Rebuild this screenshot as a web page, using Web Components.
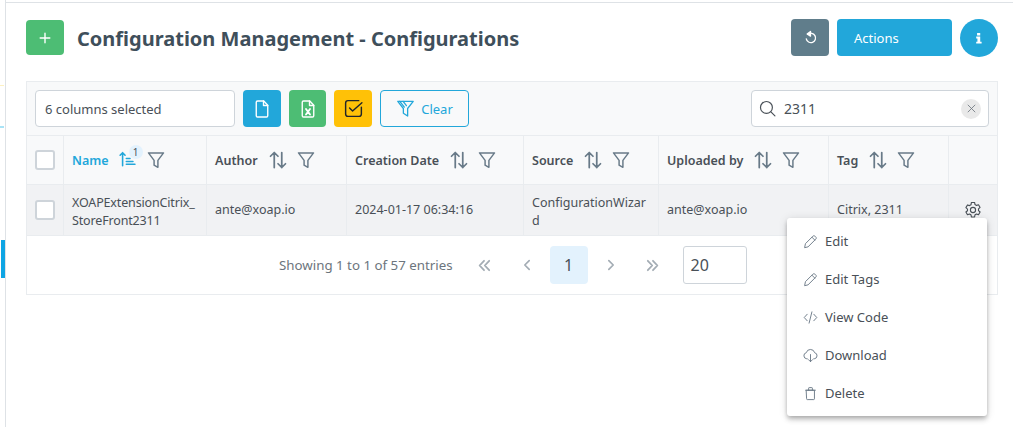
<!DOCTYPE html>
<html lang="en">
<head>
<meta charset="utf-8">
<title>Configurations</title>
<style>
  html, body { margin: 0; background: #fff; }
  body { font-family: "Noto Sans", sans-serif; color: #495057; font-size: 13px; }
</style>
</head>
<body>
<app-page></app-page>
<script>
const ICONS = {
  plus: '<path d="M8 2.500v11M2.500 8h11"/>',
  undo: '<path d="M5.200 4.600a5 5 0 1 1-1.700 4.800"/><path d="M8 1.600 4.400 4.200 8 6.500z" fill="currentColor"/>',
  info: '<path d="M5.800 2.200h3.600v2.800H5.800zM4.800 6.400h4.600v5.800h1.600v2.200H4.800v-2.200h1.400V8.600H4.800z" fill="currentColor" stroke="none"/>',
  file: '<path d="M3.400 2.600c0-.6.4-1 1-1h5l3.200 3.400v8.400c0 .6-.4 1-1 1H4.400c-.6 0-1-.4-1-1z"/><path d="M9.200 1.600v3.600h3.400"/>',
  excel: '<path d="M3.400 2.600c0-.6.4-1 1-1h5l3.200 3.400v8.400c0 .6-.4 1-1 1H4.400c-.6 0-1-.4-1-1z"/><path d="M9.200 1.600v3.600h3.400"/><path d="m6.400 8 3.200 4.400M9.600 8l-3.200 4.400" stroke-width="1.500"/>',
  check: '<path d="M14 7v5.200c0 1-.8 1.800-1.800 1.800H3.800c-1 0-1.800-.8-1.800-1.800V3.800C2 2.800 2.800 2 3.800 2H12"/><path d="m5 7.600 2.300 2.300L14.400 3.600"/>',
  clear: '<path d="M1.500 2h13L9.800 8v6.300L6.200 12V8z"/><path d="M3.200 2 7 6.800M6 2l2.800 3.600"/>',
  search: '<circle cx="7" cy="7" r="5.600"/><path d="m11.200 11.200 3.800 3.800"/>',
  times: '<path d="m3 3 10 10M13 3 3 13"/>',
  sortAlt: '<path d="M5 14V2M2 5l3-3 3 3M11 2v12M8 11l3 3 3-3"/>',
  sortUp: '<path d="M3.200 13V1.500M1 3.800l2.200-2.300 2.200 2.300M6.500 6.700h3.300M6.500 9.300h5.900M6.500 11.700h7.700"/>',
  filter: '<path d="M1.300 1.700h13.400L9.700 8.300v6.200L6.300 12.600V8.300z"/>',
  cog: '<path d="M6.600 1.300h2.800l.4 1.900 1.300.7 1.800-.6 1.400 2.400-1.400 1.300v1.500l1.400 1.300-1.400 2.400-1.800-.6-1.300.7-.4 1.900H6.600l-.4-1.900-1.300-.7-1.800.6-1.400-2.400L3.100 8.700V7.200L1.700 5.900l1.400-2.400 1.800.6 1.300-.7z"/><circle cx="8" cy="8" r="2.300"/>',
  pencil: '<path d="m1.800 14.200.8-3.900 8-8c.6-.6 1.500-.6 2.100 0l1 1c.6.600.6 1.500 0 2.100l-8 8z"/><path d="m9.500 3.400 3.100 3.100"/>',
  code: '<path d="M4.500 4.500 1.300 8l3.200 3.500M11.500 4.500 14.700 8l-3.200 3.500M9.500 2 6.500 14"/>',
  download: '<path d="M4.500 11.500H4A3.300 3.300 0 0 1 3.500 5 4.600 4.600 0 0 1 12.400 5 3.300 3.300 0 0 1 12 11.500h-.5"/><path d="M8 7v7.500M5.800 12.400 8 14.600l2.200-2.200"/>',
  trash: '<path d="M3.800 4.500h8.400v9.200c0 .5-.3.800-.8.800H4.600c-.5 0-.8-.3-.8-.8zM2.800 4.500h10.400M6 4.500V2.300c0-.4.2-.6.6-.6h2.800c.4 0 .6.2.6.6v2.200"/>',
  first: '<path d="M7.500 3 2.800 8l4.700 5M13 3 8.300 8l4.700 5"/>',
  prev: '<path d="M10.500 3 5.500 8l5 5"/>',
  next: '<path d="m5.500 3 5 5-5 5"/>',
  last: '<path d="m3 3 4.700 5L3 13M8.500 3l4.700 5-4.700 5"/>'
};

class AppIcon extends HTMLElement {
  connectedCallback() {
    const size = this.getAttribute('size') || 14;
    const sw = this.getAttribute('stroke') || 1.2;
    this.attachShadow({ mode: 'open' }).innerHTML = `
      <style>:host { display: inline-flex; line-height: 0; flex: none; } svg { display: block; }</style>
      <svg width="${size}" height="${size}" viewBox="0 0 16 16" fill="none" stroke="currentColor"
        stroke-width="${sw}" stroke-linecap="round" stroke-linejoin="round">${ICONS[this.getAttribute('name')]}</svg>`;
  }
}
customElements.define('app-icon', AppIcon);

class AppButton extends HTMLElement {
  constructor() {
    super();
    this.attachShadow({ mode: 'open' }).innerHTML = `
      <style>
        :host {
          display: inline-flex; align-items: center; justify-content: center; box-sizing: border-box;
          width: var(--w, 38px); height: var(--h, 37px); flex: none;
          background: var(--bg, #22a7da); color: var(--fg, #fff);
          border-radius: var(--r, 4px); font: 13px "Noto Sans", sans-serif; gap: 8px;
        }
      </style>
      <slot></slot>`;
  }
}
customElements.define('app-button', AppButton);

class PageHeader extends HTMLElement {
  constructor() {
    super();
    this.attachShadow({ mode: 'open' }).innerHTML = `
      <style>
        :host { display: flex; align-items: center; height: 37px; gap: 8px; }
        h1 { margin: 2px 0 0 5px; font: 700 20px/37px "Noto Sans", sans-serif; color: #3f4f5b; flex: 1; }
        .add { --bg: #4dbd74; --h: 35px; }
        .back { --bg: #607d8b; }
        .actions { --w: 115px; justify-content: flex-start; padding-left: 17px; }
        .info { --r: 50%; --h: 38px; }
      </style>
      <app-button class="add"><app-icon name="plus" size="14" stroke="1.600"></app-icon></app-button>
      <h1>Configuration Management - Configurations</h1>
      <app-button class="back"><app-icon name="undo" size="15" stroke="1.400"></app-icon></app-button>
      <app-button class="actions">Actions</app-button>
      <app-button class="info"><app-icon name="info" size="14"></app-icon></app-button>`;
  }
}
customElements.define('page-header', PageHeader);

class TableToolbar extends HTMLElement {
  constructor() {
    super();
    this.attachShadow({ mode: 'open' }).innerHTML = `
      <style>
        :host {
          display: flex; align-items: center; gap: 8px; height: 54px; box-sizing: border-box;
          padding: 0 8px; background: #f8f9fa; border-bottom: 1px solid #e9ecef;
        }
        .field {
          box-sizing: border-box; height: 37px; background: #fff; border: 1px solid #ced4da;
          border-radius: 4px; display: flex; align-items: center; font-size: 13px; color: #495057;
        }
        .cols { width: 200px; padding-left: 9px; }
        .xls { --bg: #4dbd74; --w: 37px; }
        .chk { --bg: #ffc107; --fg: #212529; }
        .clear {
          --bg: transparent; --fg: #22a7da; --w: 89px; border: 1px solid #22a7da; gap: 6px;
        }
        .search { width: 238px; margin-left: auto; padding: 0 7px 0 7px; gap: 8px; }
        .search span { flex: 1; font-size: 14px; }
        .x {
          width: 20px; height: 20px; border-radius: 50%; background: #e9e9e9; color: #6c757d;
          display: flex; align-items: center; justify-content: center;
        }
      </style>
      <div class="field cols"><span>6 columns selected</span></div>
      <app-button><app-icon name="file" size="20" stroke="1.100"></app-icon></app-button>
      <app-button class="xls"><app-icon name="excel" size="20" stroke="1.100"></app-icon></app-button>
      <app-button class="chk"><app-icon name="check" size="21" stroke="1.100"></app-icon></app-button>
      <app-button class="clear"><app-icon name="clear" size="19" stroke="1.100"></app-icon><span>Clear</span></app-button>
      <div class="field search">
        <app-icon name="search" size="17" stroke="1.100"></app-icon>
        <span>2311</span>
        <div class="x"><app-icon name="times" size="11"></app-icon></div>
      </div>`;
  }
}
customElements.define('table-toolbar', TableToolbar);

class DataTable extends HTMLElement {
  constructor() {
    super();
    const cols = ['Author', 'Creation Date', 'Source', 'Uploaded by', 'Tag'];
    const head = cols.map(c => `
      <div class="th"><span>${c}</span>
        <app-icon name="sortAlt" size="20" stroke="1.400"></app-icon>
        <app-icon name="filter" size="18" stroke="1.300" class="flt"></app-icon>
      </div>`).join('');
    this.attachShadow({ mode: 'open' }).innerHTML = `
      <style>
        :host { display: block; }
        .grid { display: grid; grid-template-columns: 37px 143px 140px 177px 135px 170px 120px 1fr; }
        .th, .td { box-sizing: border-box; display: flex; align-items: center; padding: 0 8px; border-right: 1px solid #e9ecef; }
        .th {
          height: 49px; background: #f8f9fa; font-weight: 600; font-size: 12.500px; color: #495057;
          border-bottom: 1px solid #e9ecef; gap: 10px;
        }
        .th app-icon { color: #687a88; }
        .th .flt { margin-left: -1px; }
        .td { height: 51px; background: #f1f2f4; font-size: 12.500px; line-height: 18px; border-bottom: 1px solid #e9ecef; }
        .td.two { padding-top: 3px; }
        .last { border-right: 0; }
        .name { color: #22a7da; }
        .sort { position: relative; display: inline-flex; }
        .th .sort app-icon { color: #22a7da; }
        .badge {
          position: absolute; left: 10px; top: -6px; width: 14px; height: 14px; border-radius: 50%;
          background: #e3f2fd; color: #495057; font: 400 10px/14px "Noto Sans", sans-serif; text-align: center;
        }
        .box {
          box-sizing: border-box; width: 20px; height: 20px; background: #fff;
          border: 2px solid #ced4da; border-radius: 3px;
        }
        .center { justify-content: center; padding: 0; }
        .cog { justify-content: center; padding: 0; color: #495057; }
      </style>
      <div class="grid">
        <div class="th center"><div class="box"></div></div>
        <div class="th"><span class="name">Name</span>
          <span class="sort"><app-icon name="sortUp" size="18" stroke="1.400"></app-icon><span class="badge">1</span></span>
          <app-icon name="filter" size="18" stroke="1.300"></app-icon>
        </div>
        ${head}
        <div class="th last"></div>
        <div class="td center"><div class="box"></div></div>
        <div class="td two"><span style="letter-spacing:-.15px">XOAPExtensionCitrix_<br>StoreFront2311</span></div>
        <div class="td">ante@xoap.io</div>
        <div class="td">2024-01-17 06:34:16</div>
        <div class="td two" style="word-break:break-all">ConfigurationWizard</div>
        <div class="td">ante@xoap.io</div>
        <div class="td">Citrix, 2311</div>
        <div class="td last cog"><app-icon name="cog" size="18" stroke="1"></app-icon></div>
      </div>`;
  }
}
customElements.define('data-table', DataTable);

class TablePager extends HTMLElement {
  constructor() {
    super();
    this.attachShadow({ mode: 'open' }).innerHTML = `
      <style>
        :host {
          display: flex; align-items: center; height: 58px; box-sizing: border-box; padding-left: 252px;
          font-size: 13.300px; color: #6c757d;
        }
        .info { margin-right: 13px; }
        .p { width: 38px; height: 38px; display: flex; align-items: center; justify-content: center; color: #a3acb4; margin-left: 4px; }
        .cur { background: #e3f2fd; color: #495057; border-radius: 4px; font-size: 16px; }
        .size {
          box-sizing: border-box; width: 64px; height: 38px; margin-left: 11px; padding-left: 7px;
          border: 1px solid #ced4da; border-radius: 3px; color: #495057; font-size: 16px; display: flex; align-items: center;
        }
      </style>
      <span class="info">Showing 1 to 1 of 57 entries</span>
      <span class="p" style="margin-left:0"><app-icon name="first" size="15" stroke="1.900"></app-icon></span>
      <span class="p"><app-icon name="prev" size="14" stroke="1.900"></app-icon></span>
      <span class="p cur">1</span>
      <span class="p"><app-icon name="next" size="14" stroke="1.900"></app-icon></span>
      <span class="p"><app-icon name="last" size="15" stroke="1.900"></app-icon></span>
      <span class="size">20</span>`;
  }
}
customElements.define('table-pager', TablePager);

class RowMenu extends HTMLElement {
  constructor() {
    super();
    const items = [['pencil', 'Edit'], ['pencil', 'Edit Tags'], ['code', 'View Code'], ['download', 'Download'], ['trash', 'Delete']];
    this.attachShadow({ mode: 'open' }).innerHTML = `
      <style>
        :host {
          display: block; position: absolute; left: 787px; top: 218px; width: 200px; padding: 4px 0;
          background: #fff; border-radius: 3px; font-size: 13px; color: #495057;
          box-shadow: 0 2px 4px -1px rgba(0,0,0,.2), 0 4px 5px 0 rgba(0,0,0,.14), 0 1px 10px 0 rgba(0,0,0,.12);
        }
        .item { display: flex; align-items: center; height: 38px; padding-left: 16px; gap: 7px; }
        app-icon { color: #6c7a87; }
      </style>
      ${items.map(i => `<div class="item"><app-icon name="${i[0]}" size="15" stroke="1"></app-icon>${i[1]}</div>`).join('')}`;
  }
}
customElements.define('row-menu', RowMenu);

class AppPage extends HTMLElement {
  constructor() {
    super();
    this.attachShadow({ mode: 'open' }).innerHTML = `
      <style>
        :host { display: grid; grid-template-columns: 6px 1fr; height: 427px; overflow: hidden; position: relative; }
        .rail { border-right: 1px solid #dee2e6; box-sizing: border-box; padding: 85px 0 0 1px; }
        .dot { width: 4px; height: 1px; margin-left: -1px; background: #fdf1c2; }
        .dot.b { height: 2px; margin-top: 40px; background: #a9e3f6; }
        .bar { width: 4px; height: 38px; margin-top: 112px; background: #0ea5e4; }
        main { margin-top: 2px; border-top: 1px solid #dee2e6; padding: 16px 15px 0 20px; }
        .panel { margin-top: 25px; border: 1px solid #e9ecef; }
      </style>
      <div class="rail"><div class="dot"></div><div class="dot b"></div><div class="bar"></div></div>
      <main>
        <page-header></page-header>
        <div class="panel">
          <table-toolbar></table-toolbar>
          <data-table></data-table>
          <table-pager></table-pager>
        </div>
      </main>
      <row-menu></row-menu>`;
  }
}
customElements.define('app-page', AppPage);
</script>
</body>
</html>
